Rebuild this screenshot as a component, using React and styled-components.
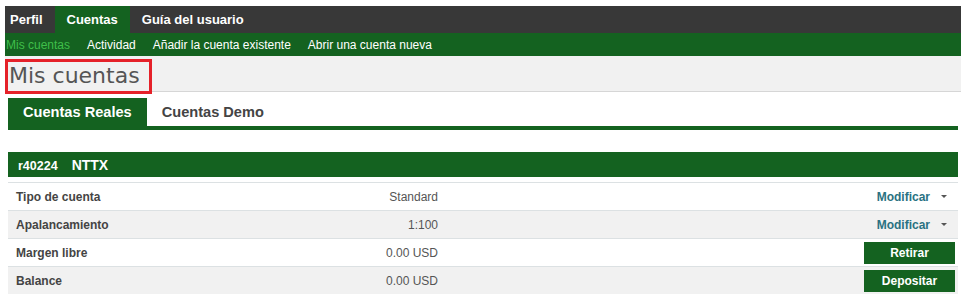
import React from 'react';
import styled, { createGlobalStyle } from 'styled-components';

const GREEN = '#146220';

const Global = createGlobalStyle`
  html, body { margin: 0; padding: 0; background: #fff; }
  body { font-family: "Liberation Sans", Arial, sans-serif; }
  * { box-sizing: border-box; }
`;

const Page = styled.div`
  width: 956px;
  margin: 6px 0 0 5px;
`;

const TopNav = styled.nav`
  display: flex;
  height: 27px;
  background: #383838;
`;

const TopItem = styled.a`
  display: flex;
  align-items: center;
  padding: 0 12px;
  font-weight: bold;
  font-size: 13px;
  color: #fff;
  text-decoration: none;
  background: ${p => (p.$active ? GREEN : 'transparent')};
  &:first-child { padding-left: 5px; }
`;

const SubNav = styled.nav`
  display: flex;
  align-items: center;
  gap: 17px;
  height: 23px;
  padding-left: 1px;
  background: ${GREEN};
`;

const SubItem = styled.a`
  font-size: 12px;
  color: ${p => (p.$active ? '#3fbf4a' : '#fff')};
  text-decoration: none;
`;

const TitleBar = styled.div`
  height: 36px;
  padding-top: 3px;
  background: #f1f1f1;
  border-bottom: 1px solid #d6d6d6;
`;

const Title = styled.h1`
  margin: 0;
  width: 147px;
  height: 35px;
  border: 3px solid #e52129;
  padding-left: 1px;
  font-family: "DejaVu Sans", Verdana, sans-serif;
  font-weight: normal;
  font-size: 22px;
  line-height: 28px;
  color: #555;
`;

const Content = styled.div`
  padding: 0 3px;
`;

const Tabs = styled.div`
  display: flex;
  margin-top: 6px;
  border-bottom: 4px solid ${GREEN};
`;

const Tab = styled.a`
  height: 28px;
  line-height: 28px;
  padding: 0 15px;
  font-weight: bold;
  font-size: 14.6px;
  text-decoration: none;
  color: ${p => (p.$active ? '#fff' : '#444')};
  background: ${p => (p.$active ? GREEN : 'transparent')};
`;

const Account = styled.section`
  margin-top: 22px;
`;

const AccountHead = styled.div`
  display: flex;
  align-items: baseline;
  gap: 14px;
  height: 25px;
  padding: 5px 0 0 10px;
  background: ${GREEN};
  color: #fff;
  font-weight: bold;
`;

const AccNum = styled.span`
  font-size: 12.5px;
`;

const AccName = styled.span`
  font-size: 14px;
`;

const Rows = styled.div`
  margin-top: 5px;
`;

const Row = styled.div`
  display: grid;
  grid-template-columns: 215px 215px 1fr;
  align-items: center;
  height: 28px;
  border-top: 1px solid #dce1e3;
  background: ${p => (p.$alt ? '#f1f1f1' : '#fff')};
  font-size: 12px;
`;

const Label = styled.span`
  padding-left: 8px;
  font-weight: bold;
  color: #444;
`;

const Value = styled.span`
  text-align: right;
  color: #555;
`;

const Action = styled.div`
  justify-self: end;
  display: flex;
  align-items: center;
  padding-right: ${p => (p.$button ? '3px' : '11px')};
`;

const Modify = styled.a`
  font-weight: bold;
  font-size: 12px;
  color: #2a7282;
  text-decoration: none;
`;

const Caret = styled.span`
  display: inline-block;
  margin-left: 11px;
  width: 0;
  height: 0;
  border-style: solid;
  border-width: 3px 3px 0 3px;
  border-color: #555 transparent transparent transparent;
`;

const Button = styled.button`
  width: 91px;
  height: 22px;
  border: none;
  padding: 0;
  background: ${GREEN};
  color: #fff;
  font-family: "Liberation Sans", Arial, sans-serif;
  font-weight: bold;
  font-size: 12px;
`;

const rows = [
  { label: 'Tipo de cuenta', value: 'Standard', action: 'modify' },
  { label: 'Apalancamiento', value: '1:100', action: 'modify' },
  { label: 'Margen libre', value: '0.00 USD', action: 'Retirar' },
  { label: 'Balance', value: '0.00 USD', action: 'Depositar' },
];

export default function App() {
  return (
    <>
      <Global />
      <Page>
        <TopNav>
          <TopItem>Perfil</TopItem>
          <TopItem $active>Cuentas</TopItem>
          <TopItem>Guía del usuario</TopItem>
        </TopNav>
        <SubNav>
          <SubItem $active>Mis cuentas</SubItem>
          <SubItem>Actividad</SubItem>
          <SubItem>Añadir la cuenta existente</SubItem>
          <SubItem>Abrir una cuenta nueva</SubItem>
        </SubNav>
        <TitleBar>
          <Title>Mis cuentas</Title>
        </TitleBar>
        <Content>
          <Tabs>
            <Tab $active>Cuentas Reales</Tab>
            <Tab>Cuentas Demo</Tab>
          </Tabs>
          <Account>
            <AccountHead>
              <AccNum>r40224</AccNum>
              <AccName>NTTX</AccName>
            </AccountHead>
            <Rows>
              {rows.map((r, i) => (
                <Row key={r.label} $alt={i % 2 === 1}>
                  <Label>{r.label}</Label>
                  <Value>{r.value}</Value>
                  {r.action === 'modify' ? (
                    <Action>
                      <Modify>Modificar</Modify>
                      <Caret />
                    </Action>
                  ) : (
                    <Action $button>
                      <Button>{r.action}</Button>
                    </Action>
                  )}
                </Row>
              ))}
            </Rows>
          </Account>
        </Content>
      </Page>
    </>
  );
}
